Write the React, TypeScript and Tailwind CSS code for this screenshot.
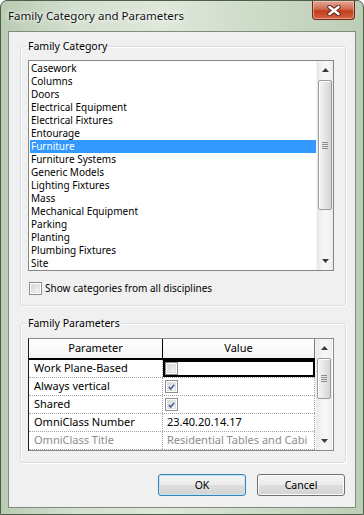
import React from "react";

const items = [
  "Casework",
  "Columns",
  "Doors",
  "Electrical Equipment",
  "Electrical Fixtures",
  "Entourage",
  "Furniture",
  "Furniture Systems",
  "Generic Models",
  "Lighting Fixtures",
  "Mass",
  "Mechanical Equipment",
  "Parking",
  "Planting",
  "Plumbing Fixtures",
  "Site",
];

function Arrow({ dir }: { dir: "up" | "down" }) {
  return (
    <svg width="7" height="4" viewBox="0 0 7 4">
      {dir === "up" ? (
        <path d="M0 4L3.5 0L7 4Z" fill="#3a3a3a" />
      ) : (
        <path d="M0 0L3.5 4L7 0Z" fill="#3a3a3a" />
      )}
    </svg>
  );
}

function Scrollbar({
  arrowH,
  thumbTop,
  thumbH,
}: {
  arrowH: number;
  thumbTop: number;
  thumbH: number;
}) {
  return (
    <div className="w-[17px] h-full flex flex-col bg-[linear-gradient(90deg,#e9e9e9,#f6f6f6_40%,#f6f6f6_70%,#ebebeb)] border-l border-[#f4f4f4]">
      <div
        className="flex items-center justify-center shrink-0"
        style={{ height: arrowH }}
      >
        <Arrow dir="up" />
      </div>
      <div className="flex-1 flex flex-col">
        <div
          className="ml-[1px] mr-[1px] rounded-[2px] border border-[#9b9b9b] bg-[linear-gradient(90deg,#f4f4f4,#e6e6e6_50%,#d4d4d4)] shadow-[inset_1px_1px_0_#ffffff] flex flex-col items-center justify-center gap-[1px]"
          style={{ marginTop: thumbTop, height: thumbH }}
        >
          <div className="w-[6px] h-[1px] bg-[#8d8d8d]" />
          <div className="w-[6px] h-[1px] bg-[#8d8d8d]" />
          <div className="w-[6px] h-[1px] bg-[#8d8d8d]" />
          <div className="w-[6px] h-[1px] bg-[#8d8d8d]" />
        </div>
      </div>
      <div
        className="flex items-center justify-center shrink-0"
        style={{ height: arrowH }}
      >
        <Arrow dir="down" />
      </div>
    </div>
  );
}

function Checkbox({ checked }: { checked?: boolean }) {
  return (
    <div className="w-[13px] h-[13px] border border-[#8e8f8f] bg-white p-[1px] shrink-0">
      <div className="w-full h-full bg-[linear-gradient(135deg,#d8d8d8,#f6f6f6)] border border-[#e0e0e0] flex items-center justify-center">
        {checked && (
          <svg width="9" height="8" viewBox="0 0 9 8">
            <path
              d="M1 4 L3.4 6.6 L8 1"
              stroke="#4b5e9c"
              strokeWidth="2"
              fill="none"
            />
          </svg>
        )}
      </div>
    </div>
  );
}

export default function App() {
  return (
    <div
      className="w-[364px] h-[515px] border border-[#4f5d4b] rounded-t-[7px] bg-[linear-gradient(90deg,#b9cbb2,#d3dfcf_20%,#dfe8db_45%,#cedbc8_70%,#bccdb5)] flex flex-col text-black"
      style={{ fontFamily: '"Noto Sans", "Open Sans", sans-serif' }}
    >
      {/* Title bar */}
      <div className="h-[30px] shrink-0 flex items-start justify-between pl-[7px] pr-[8px]">
        <div className="text-[11.5px] leading-[30px] text-[#111] [text-shadow:0_0_6px_#ffffff,0_0_3px_#ffffff]">
          Family Category and Parameters
        </div>
        <div className="w-[43px] h-[19px] rounded-b-[4px] border border-t-0 border-[#6a2a1c] bg-[linear-gradient(#e3a898,#d06a4f_45%,#c23d1c_55%,#d2633f)] shadow-[inset_0_0_0_1px_rgba(255,210,190,0.55)] flex items-center justify-center">
          <svg width="14" height="11" viewBox="0 0 14 11">
            <path
              d="M2.5 2 L11.5 9 M11.5 2 L2.5 9"
              stroke="#5b2016"
              strokeWidth="4.4"
              strokeLinecap="round"
            />
            <path
              d="M2.5 2 L11.5 9 M11.5 2 L2.5 9"
              stroke="#ffffff"
              strokeWidth="2.6"
              strokeLinecap="round"
            />
          </svg>
        </div>
      </div>

      {/* Client area */}
      <div className="mx-[7px] h-[477px] shrink-0 border border-[#7f8c7b] bg-[#f0f0f0] flex flex-col text-[10px]">
        {/* Family Category */}
        <fieldset className="mt-[7px] ml-[11px] mr-[9px] border border-[#d5dfe5] rounded-[3px] shadow-[inset_1px_1px_0_#ffffff,1px_1px_0_#ffffff] pt-[6px] px-[7px] pb-[10px]">
          <legend className="ml-[-1px] px-[1px] leading-[15px] text-[10.5px]">
            Family Category
          </legend>
          <div className="w-[306px] h-[211px] border border-[#828790] bg-white flex">
            <div className="flex-1 pl-[1px] pt-[1px] leading-[13px]">
              {items.map((it) => (
                <div
                  key={it}
                  className={
                    it === "Furniture"
                      ? "h-[13px] pl-[1px] bg-[#3399ff] text-white whitespace-nowrap"
                      : "h-[13px] pl-[1px] whitespace-nowrap"
                  }
                >
                  {it}
                </div>
              ))}
            </div>
            <Scrollbar arrowH={18} thumbTop={1} thumbH={130} />
          </div>
          <div className="mt-[11px] h-[13px] flex items-center gap-[3px] ml-[1px]">
            <Checkbox />
            <span className="leading-[13px]">
              Show categories from all disciplines
            </span>
          </div>
        </fieldset>

        {/* Family Parameters */}
        <fieldset className="mt-[10px] ml-[11px] mr-[9px] border border-[#d5dfe5] rounded-[3px] shadow-[inset_1px_1px_0_#ffffff,1px_1px_0_#ffffff] pt-[7px] px-[7px] pb-[11px]">
          <legend className="ml-[-1px] px-[1px] leading-[15px] text-[10.5px]">
            Family Parameters
          </legend>
          <div className="w-[306px] h-[113px] border border-[#8a8a8a] border-l-[#1e1e1e] bg-white flex text-[11px]">
            <div className="w-[286px] flex flex-col">
              <div className="h-[21px] shrink-0 flex border-b-2 border-black bg-[linear-gradient(#ffffff,#f3f3f3)]">
                <div className="w-[134px] border-r border-black flex items-center justify-center">
                  Parameter
                </div>
                <div className="w-[152px] border-r border-[#7a7a7a] flex items-center justify-center">
                  Value
                </div>
              </div>
              <Row label="Work Plane-Based" selected>
                <div className="pl-[2px] flex items-center h-full">
                  <Checkbox />
                </div>
              </Row>
              <Row label="Always vertical">
                <div className="pl-[2px] flex items-center h-full">
                  <Checkbox checked />
                </div>
              </Row>
              <Row label="Shared">
                <div className="pl-[2px] flex items-center h-full">
                  <Checkbox checked />
                </div>
              </Row>
              <Row label="OmniClass Number">
                <div className="pl-[4px] flex items-center h-full whitespace-nowrap">
                  23.40.20.14.17
                </div>
              </Row>
              <Row label="OmniClass Title" gray>
                <div className="pl-[4px] flex items-center h-full whitespace-nowrap">
                  Residential Tables and Cabi
                </div>
              </Row>
            </div>
            <Scrollbar arrowH={18} thumbTop={1} thumbH={41} />
          </div>
        </fieldset>

        {/* Buttons */}
        <div className="mt-[11px] mr-[10px] flex justify-end gap-[11px]">
          <button className="w-[88px] h-[22px] rounded-[3px] border border-[#3c7fb1] bg-[linear-gradient(#f4f4f4,#ececec_48%,#dedede_52%,#d3d3d3)] shadow-[inset_0_0_0_1px_#bfe6f9] text-[10.5px] leading-none">
            OK
          </button>
          <button className="w-[88px] h-[22px] rounded-[3px] border border-[#707070] bg-[linear-gradient(#f4f4f4,#ececec_48%,#dedede_52%,#d3d3d3)] shadow-[inset_0_0_0_1px_#fcfcfc] text-[10.5px] leading-none">
            Cancel
          </button>
        </div>
      </div>
    </div>
  );
}

function Row({
  label,
  children,
  selected,
  gray,
}: {
  label: string;
  children: React.ReactNode;
  selected?: boolean;
  gray?: boolean;
}) {
  return (
    <div
      className={
        "h-[18px] shrink-0 flex border-b border-dotted border-[#a5a5a5] " +
        (gray ? "text-[#8c8c8c]" : "")
      }
    >
      <div className="w-[134px] border-r border-dotted border-[#a5a5a5] pl-[5px] flex items-center whitespace-nowrap overflow-hidden">
        {label}
      </div>
      <div
        className={
          selected
            ? "w-[152px] shadow-[inset_0_0_0_2px_#000] overflow-hidden"
            : "w-[152px] border-r border-dotted border-[#a5a5a5] overflow-hidden"
        }
      >
        {children}
      </div>
    </div>
  );
}
